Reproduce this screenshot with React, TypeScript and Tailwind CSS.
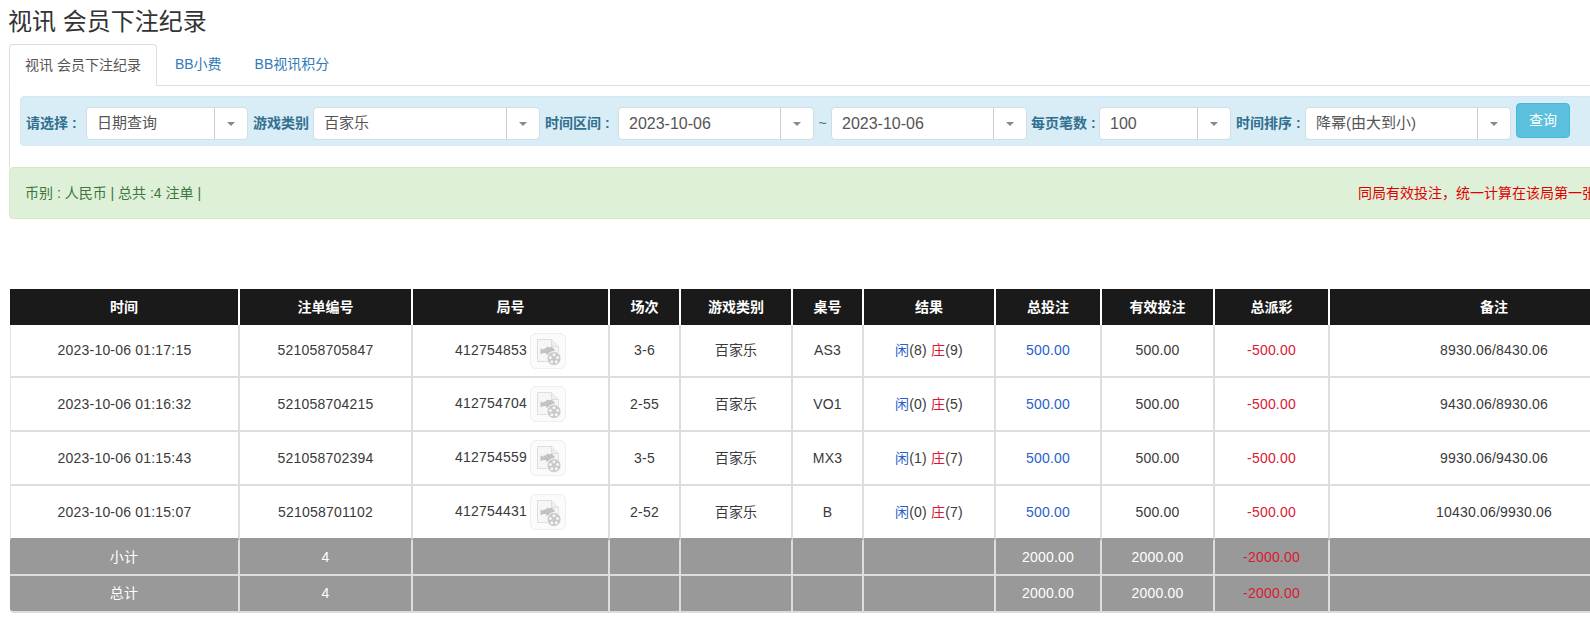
import React from "react";

const stack = { fontFamily: '"Liberation Sans","Noto Sans CJK SC",sans-serif' };

function Select({ w, text, cjk }: { w: string; text: string; cjk?: boolean }) {
  return (
    <div className={`${w} h-[33px] shrink-0 flex bg-white border border-[#cfdde5] rounded-[4px]`}>
      <div className={`flex-1 min-w-0 pl-[10px] flex items-center text-[#555] whitespace-nowrap ${cjk ? "text-[15px]" : "text-[16px]"}`}>{text}</div>
      <div className="w-[33px] shrink-0 border-l border-[#ccc] flex items-center justify-center">
        <span className="block w-0 h-0 border-x-[4px] border-x-transparent border-t-[4px] border-t-[#888]" />
      </div>
    </div>
  );
}

function Label({ w, children }: { w: string; children: React.ReactNode }) {
  return <div className={`${w} h-[33px] flex items-center shrink-0 text-[14px] font-bold text-[#31708f] whitespace-nowrap`}>{children}</div>;
}

function ReplayIcon() {
  return (
    <span className="inline-flex w-[36px] h-[36px] items-center justify-center border border-[#eee] rounded-[6px] bg-[#fbfbfb] align-middle ml-[3px]">
      <svg width="30" height="30" viewBox="0 0 30 30" className="opacity-80">
        <path d="M4.500 3.500h14l7 7v15h-21z" fill="#f6f6f6" stroke="#d8d8d8" strokeWidth="1" />
        <path d="M18.500 3.500v7h7" fill="#ececec" stroke="#d8d8d8" strokeWidth="1" />
        <path d="M7.500 12.500l3 1.200v-1.200h2.500a2 2 0 0 1 3.500 -1a2 2 0 0 1 3.500 1h1.500v6h-8.500v-1.500h-2.500l-3 1.200z" fill="#b4b4b4" />
        <circle cx="21" cy="22.500" r="7" fill="#bdbdbd" stroke="#f6f6f6" strokeWidth="1" />
        <circle cx="21" cy="18.800" r="1.500" fill="#f4f4f4" />
        <circle cx="24.600" cy="21.400" r="1.500" fill="#f4f4f4" />
        <circle cx="23.200" cy="25.700" r="1.500" fill="#f4f4f4" />
        <circle cx="18.800" cy="25.700" r="1.500" fill="#f4f4f4" />
        <circle cx="17.400" cy="21.400" r="1.500" fill="#f4f4f4" />
      </svg>
    </span>
  );
}

const heads = ["时间", "注单编号", "局号", "场次", "游戏类别", "桌号", "结果", "总投注", "有效投注", "总派彩", "备注"];
const widths = [230, 173, 197, 71, 112, 71, 132, 106, 113, 115, 330];

const rows = [
  ["2023-10-06 01:17:15", "521058705847", "412754853", "3-6", "AS3", "8", "9", "8930.06/8430.06", "h-[53px]"],
  ["2023-10-06 01:16:32", "521058704215", "412754704", "2-55", "VO1", "0", "5", "9430.06/8930.06", "h-[54px]"],
  ["2023-10-06 01:15:43", "521058702394", "412754559", "3-5", "MX3", "1", "7", "9930.06/9430.06", "h-[54px]"],
  ["2023-10-06 01:15:07", "521058701102", "412754431", "2-52", "B", "0", "7", "10430.06/9930.06", "h-[54px]"],
];

const td = "border-r-2 border-b-2 border-[#ddd] text-center p-0";
const gray = `${td} bg-[#999]`;

export default function App() {
  return (
    <div className="w-[1590px] h-[636px] overflow-hidden bg-white text-[#333] text-[14px]" style={stack}>
      <div className="w-[1700px]">
        <h3 className="text-[24px] leading-[26px] font-normal pl-[8px] pt-[9px] text-[#333]">视讯 会员下注纪录</h3>

        <div className="mt-[9px] ml-[9px] flex h-[42px] border-b border-[#ddd]">
          <div className="h-[42px] px-[15px] leading-[40px] bg-white border border-[#ddd] border-b-white rounded-t-[4px] text-[#555] whitespace-nowrap">视讯 会员下注纪录</div>
          <div className="ml-[2px] h-[41px] px-[16px] leading-[40px] text-[#337ab7] whitespace-nowrap">BB小费</div>
          <div className="ml-[1px] h-[41px] px-[16px] leading-[40px] text-[#337ab7] whitespace-nowrap">BB视讯积分</div>
        </div>

        <div className="ml-[9px] border-l border-[#ddd] pl-[10px] pt-[10px] pb-[21px]">
          <div className="h-[50px] bg-[#d9edf7] border border-[#d3e8f3] rounded-l-[4px] pl-[5px] pt-[10px] flex items-start">
            <Label w="w-[60px]">请选择 :</Label>
            <Select w="w-[162px]" text="日期查询" cjk />
            <div className="w-[5px] shrink-0" />
            <Label w="w-[60px]">游戏类别</Label>
            <Select w="w-[227px]" text="百家乐" cjk />
            <div className="w-[5px] shrink-0" />
            <Label w="w-[73px]">时间区间 :</Label>
            <Select w="w-[196px]" text="2023-10-06" />
            <div className="w-[17px] h-[33px] flex items-center justify-center shrink-0 text-[#31708f]">~</div>
            <Select w="w-[196px]" text="2023-10-06" />
            <div className="w-[4px] shrink-0" />
            <Label w="w-[68px]">每页笔数 :</Label>
            <Select w="w-[132px]" text="100" />
            <div className="w-[5px] shrink-0" />
            <Label w="w-[69px]">时间排序 :</Label>
            <Select w="w-[206px]" text="降幂(由大到小)" cjk />
            <div className="ml-[5px] w-[54px] h-[35px] -mt-[4px] shrink-0 bg-[#5bc0de] border border-[#46b8da] rounded-[4px] text-white flex items-center justify-center">查询</div>
          </div>
        </div>

        <div className="ml-[9px] h-[52px] bg-[#dff0d8] border border-[#d6e9c6] rounded-l-[4px] pl-[15px] flex items-center whitespace-nowrap">
          <div className="w-[1333px] shrink-0 text-[#3c763d]">币别 : 人民币 | 总共 :4 注单 |</div>
          <div className="text-[#e00000]">同局有效投注，统一计算在该局第一张注单</div>
        </div>

        <table className="mt-[70px] ml-[10px] table-fixed border-separate border-spacing-0 w-[1650px] tracking-[0.2px]">
          <colgroup>
            {widths.map((w, i) => (
              <col key={i} style={{ width: w }} />
            ))}
          </colgroup>
          <thead>
            <tr className="h-[36px]">
              {heads.map((h) => (
                <th key={h} className="bg-[#1a1a1a] text-white font-bold text-center border-r-2 border-white p-0 tracking-normal">{h}</th>
              ))}
            </tr>
          </thead>
          <tbody className="text-[#3a3a3a]">
            {rows.map((r, n) => {
              const c = n === 3 ? `${td} border-b-[#999]` : td;
              return (
                <tr key={r[1]} className={r[8]}>
                  <td className={`${c} border-l border-l-[#e5e5e5]`}>{r[0]}</td>
                  <td className={c}>{r[1]}</td>
                  <td className={c}>
                    {r[2]}
                    <ReplayIcon />
                  </td>
                  <td className={c}>{r[3]}</td>
                  <td className={c}>百家乐</td>
                  <td className={c}>{r[4]}</td>
                  <td className={c}>
                    <span className="text-[#2a5fc9]">闲</span>({r[5]}) <span className="text-[#d91a32]">庄</span>({r[6]})
                  </td>
                  <td className={`${c} text-[#2a5fc9]`}>500.00</td>
                  <td className={c}>500.00</td>
                  <td className={`${c} text-[#d91a32]`}>-500.00</td>
                  <td className={c}>{r[7]}</td>
                </tr>
              );
            })}
            {["小计", "总计"].map((t, n) => (
              <tr key={t} className={`${n === 0 ? "h-[36px]" : "h-[37px]"} text-white`}>
                <td className={`${gray} ${n === 1 ? "rounded-bl-[4px]" : ""}`}>{t}</td>
                <td className={gray}>4</td>
                <td className={gray} />
                <td className={gray} />
                <td className={gray} />
                <td className={gray} />
                <td className={gray} />
                <td className={gray}>2000.00</td>
                <td className={gray}>2000.00</td>
                <td className={`${gray} text-[#d91a32]`}>-2000.00</td>
                <td className={gray} />
              </tr>
            ))}
          </tbody>
        </table>
      </div>
    </div>
  );
}
